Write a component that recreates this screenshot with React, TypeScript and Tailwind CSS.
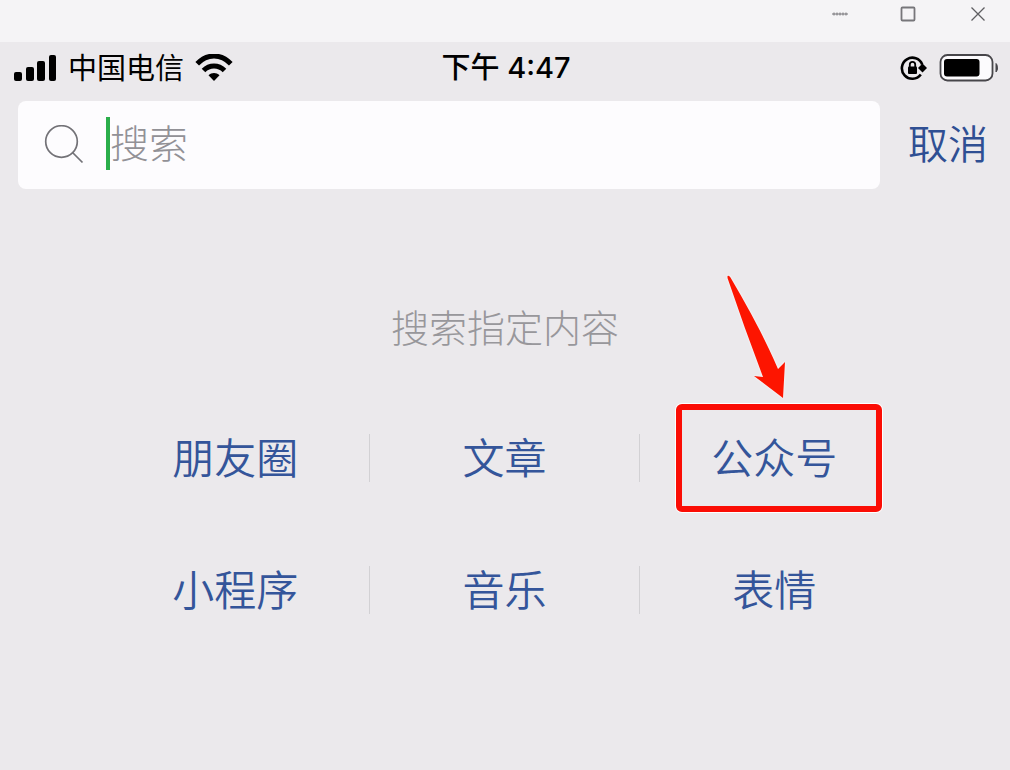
import React from 'react';

interface CategoryProps {
  label: string;
  divided?: boolean;
  highlighted?: boolean;
}

const rows: CategoryProps[][] = [
  [
    { label: '朋友圈', divided: true },
    { label: '文章', divided: true },
    { label: '公众号', highlighted: true },
  ],
  [{ label: '小程序', divided: true }, { label: '音乐', divided: true }, { label: '表情' }],
];

const TitleBar = () => (
  <div className="h-[42px] flex justify-end bg-[#f5f4f6] text-[#77767a]">
    <button aria-label="最小化" className="w-[68px] h-7 flex items-center justify-center">
      <svg width="16" height="4" viewBox="0 0 16 4" fill="none" stroke="currentColor">
        <path d="M0 2h16" strokeWidth="1" />
        <path d="M1 2h14" strokeWidth="3" strokeDasharray="2 1" opacity="0.5" />
      </svg>
    </button>
    <button aria-label="最大化" className="w-[68px] h-7 flex items-center justify-center">
      <svg width="16" height="16" viewBox="0 0 16 16" fill="none" stroke="currentColor" strokeWidth="1.8">
        <rect x="1.5" y="1.5" width="13" height="13" rx="1" />
      </svg>
    </button>
    <button aria-label="关闭" className="w-[68px] h-7 pl-1 flex items-center justify-center">
      <svg width="16" height="16" viewBox="0 0 16 16" fill="none" stroke="#5f5e62" strokeWidth="1.3">
        <path d="M1.5 1.5l13 13M14.5 1.5l-13 13" />
      </svg>
    </button>
  </div>
);

const StatusBar = () => (
  <div className="h-[59px] pl-3.5 pr-3 pb-2 grid grid-cols-3 items-center text-black">
    <div className="flex items-center gap-[11px]">
      <svg width="43" height="28" viewBox="0 0 43 28" fill="currentColor">
        <rect x="0" y="18" width="8" height="9" rx="2" />
        <rect x="12" y="13" width="8" height="14" rx="2" />
        <rect x="23" y="7" width="8" height="20" rx="2" />
        <rect x="35" y="1" width="7" height="26" rx="2" />
      </svg>
      <span className="pb-1 text-[29px] leading-9">中国电信</span>
      <svg width="38" height="28" viewBox="0 0 38 28" fill="none" stroke="currentColor" strokeWidth="5">
        <path d="M2.2 9.8C12-.6 26-.6 35.8 9.8" />
        <path d="M8.5 16.4C14.5 10.4 23.5 10.4 29.5 16.4" />
        <path d="M19 27l-5.5-5.8c3.2-2.8 7.8-2.8 11 0z" fill="currentColor" stroke="none" />
      </svg>
    </div>
    <div className="text-center text-[29px] leading-9 font-medium font-[Inter,'Noto_Sans_CJK_SC',sans-serif]">
      下午 4:47
    </div>
    <div className="flex items-center justify-end gap-3">
      <svg width="27" height="26" viewBox="0 0 27 26" fill="none" stroke="currentColor">
        <path d="M22.2 9.5A10.5 10.5 0 1 0 20.8 19.5" strokeWidth="2.6" />
        <path d="M18 13l4.5-4.5 4.5 4.5-4.5 4.5z" fill="currentColor" stroke="none" />
        <rect x="8" y="11.5" width="9" height="7.5" rx="1" fill="currentColor" stroke="none" />
        <path d="M9.8 12V9.5a2.7 2.7 0 0 1 5.4 0V12" strokeWidth="1.8" />
      </svg>
      <svg width="59" height="28" viewBox="0 0 59 28">
        <rect x="1.5" y="1" width="52" height="25.5" rx="7" fill="#fcfbfd" stroke="#47464a" strokeWidth="1.8" />
        <rect x="5" y="5" width="35.5" height="17.5" rx="3" fill="currentColor" />
        <path d="M57 9.5c2 2 2 6.5 0 8.5z" fill="#47464a" stroke="#47464a" />
      </svg>
    </div>
  </div>
);

const SearchBar = () => (
  <form className="pl-[18px] pr-[22px] flex items-center gap-7">
    <label className="h-[88px] min-w-0 flex-1 pl-[26px] flex items-center bg-[#fdfcfe] rounded-lg">
      <svg width="40" height="40" viewBox="0 0 40 40" fill="none" stroke="#737277" strokeWidth="1.7">
        <circle cx="17.5" cy="16.5" r="15.8" />
        <path d="M28.5 27.5l10 10" />
      </svg>
      <span className="ml-[22px] mb-1 w-1 h-[53px] shrink-0 bg-[#2bae4b]" />
      <input
        aria-label="搜索"
        placeholder="搜索"
        className="min-w-0 flex-1 h-14 pb-2 text-[39px] font-light outline-none placeholder:text-[#929196]"
      />
    </label>
    <button type="button" className="pb-1.5 text-[40px] leading-14 font-[350] text-[#2f4f93]">
      取消
    </button>
  </form>
);

const Arrow = () => (
  <svg
    width="60"
    height="124"
    viewBox="0 0 60 124"
    className="absolute -top-[135px] left-11 drop-shadow-[0_0_1px_white]"
  >
    <path d="M1.5 1Q3 0 4.500 2.500Q36 56 52 94L59 87L57 123L28 101L37 102Q18 52 1.500 3z" fill="#fd1500" />
  </svg>
);

const Category = ({ label, divided, highlighted }: CategoryProps) => (
  <div className={`relative h-12 flex items-center justify-center ${divided ? 'border-r border-[#d2d1d4]' : ''}`}>
    <button className="pb-1 text-[42px] leading-11 font-[350] text-[#34559a]">{label}</button>
    {highlighted ? (
      <div className="absolute -inset-y-[30px] left-9 right-[27px] border-6 border-[#fb0d05] rounded-md ring-1 ring-white pointer-events-none">
        <Arrow />
      </div>
    ) : (
      <></>
    )}
  </div>
);

const App = () => {
  return (
    <div className="min-h-screen bg-[#ebe9ec] font-['Noto_Sans_CJK_SC',sans-serif]">
      <TitleBar />
      <StatusBar />
      <SearchBar />
      <main className="pt-[109px] pb-24">
        <h1 className="text-center text-[38px] leading-14 font-light text-[#98979b]">搜索指定内容</h1>
        <div className="mt-20 px-[10%] flex flex-col gap-[84px]">
          {rows.map((row, index) => (
            <div key={index} className="grid grid-cols-3">
              {row.map(category => (
                <Category key={category.label} {...category} />
              ))}
            </div>
          ))}
        </div>
      </main>
    </div>
  );
};

export default App;
